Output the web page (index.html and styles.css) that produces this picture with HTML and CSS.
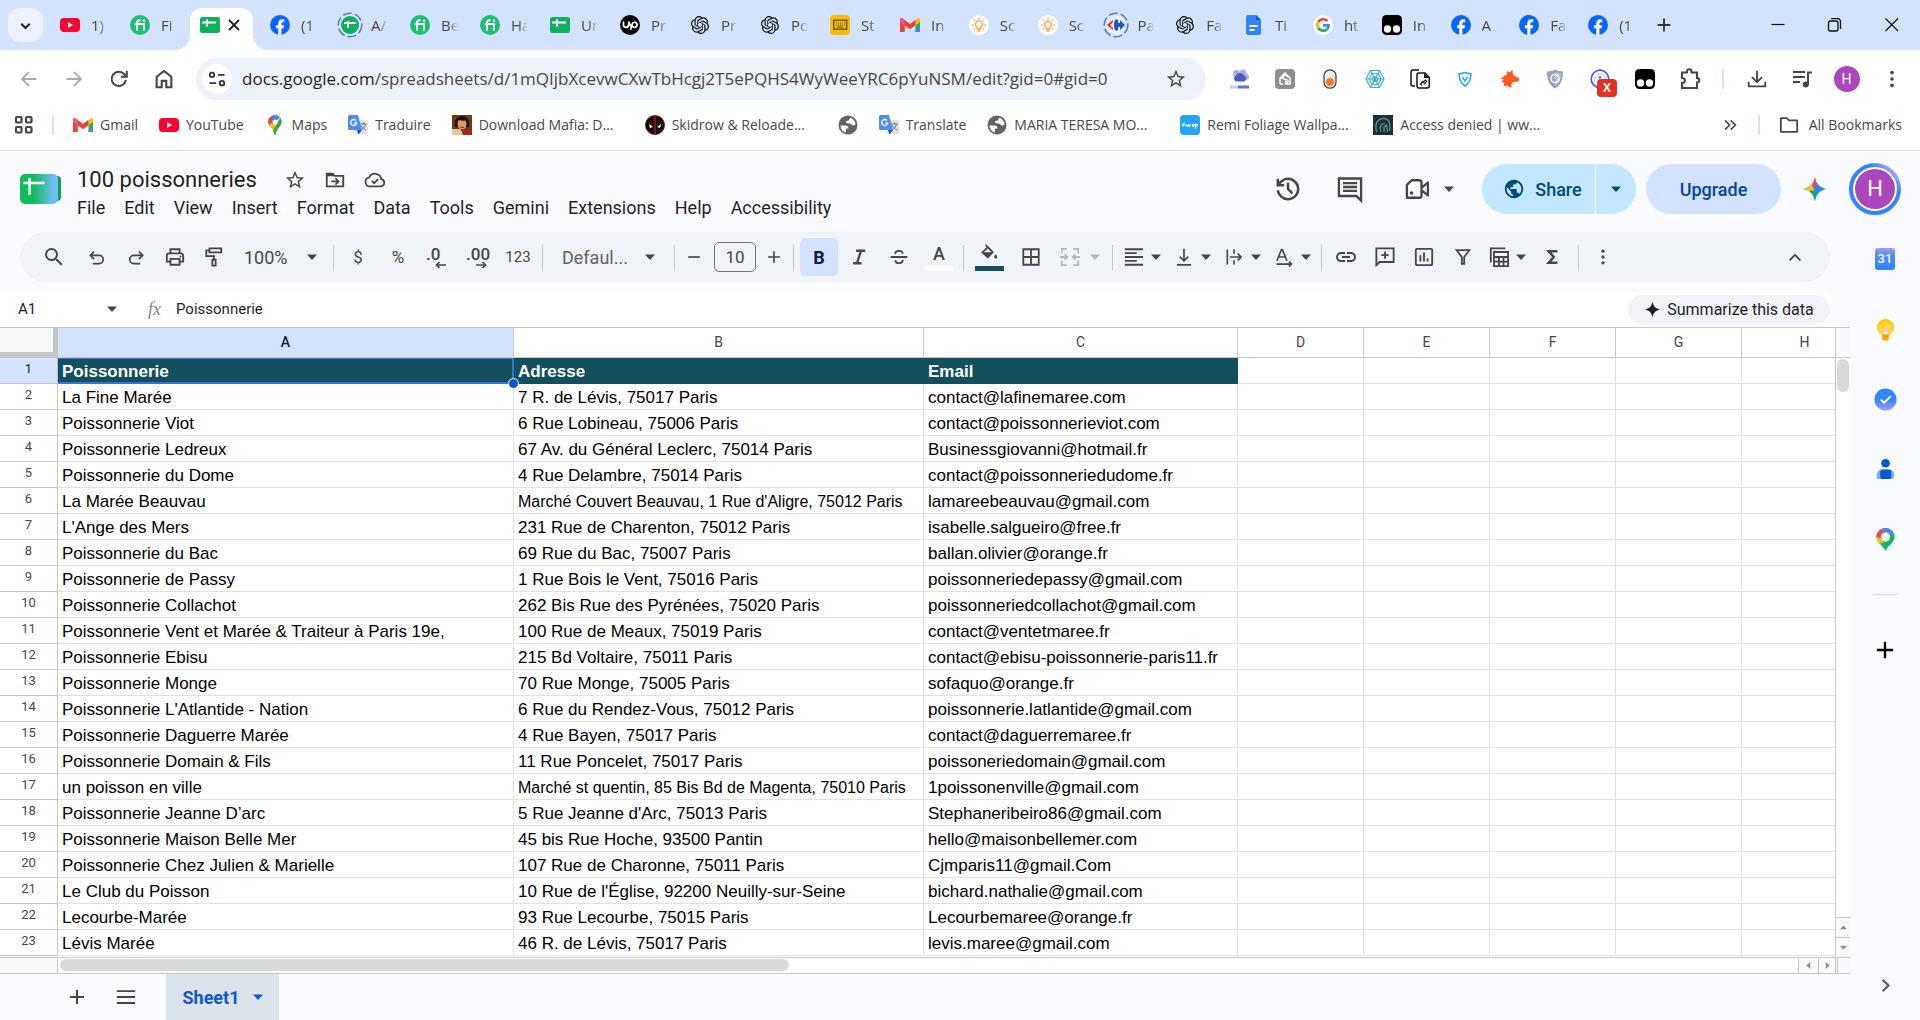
FILE: index.html
```html
<!DOCTYPE html>
<html lang="en">
<head>
<meta charset="utf-8">
<title>100 poissonneries</title>
<link rel="stylesheet" href="styles.css">
</head>
<body>
<svg class="sprite" aria-hidden="true">
  <defs>
    <linearGradient id="gSheet" x1="0" x2="1" y1="0" y2="0"><stop offset=".35" stop-color="#14bb5e"/><stop offset=".9" stop-color="#70bdf8"/></linearGradient>
    <linearGradient id="gTask" x1="0" x2="0" y1="0" y2="1"><stop offset=".5" stop-color="#3186ff"/><stop offset="1" stop-color="#a99bf8"/></linearGradient>
    <linearGradient id="gRing" x1="0" x2="1" y1="1" y2="0"><stop offset=".7" stop-color="#3186ff"/><stop offset=".9" stop-color="#a9a8ff"/></linearGradient>
    <radialGradient id="gKeep" cx=".5" cy=".7" r=".7"><stop offset="0" stop-color="#ffb8d4"/><stop offset=".5" stop-color="#ffe02e"/><stop offset="1" stop-color="#fcbd00"/></radialGradient>
    <clipPath id="cSpark"><path d="M12 0c1.200 7 5 10.800 12 12-7 1.200-10.800 5-12 12-1.200-7-5-10.800-12-12 7-1.200 10.800-5 12-12z"/></clipPath>
  </defs>
  <symbol id="youtube" viewBox="0 0 20 20"><rect y="3" width="20" height="14" rx="4" fill="#ff0033"/><path d="M8 7v6l5-3z" fill="#fff"/></symbol>
  <symbol id="fiverr" viewBox="0 0 20 20"><circle cx="10" cy="10" r="10" fill="#1dbf73"/><path d="M7 15.500V8c0-2 1-3 3.500-2.700M4.800 9H14v6.500" fill="none" stroke="#fff" stroke-width="2"/><circle cx="14" cy="5.700" r="1.200" fill="#fff"/></symbol>
  <symbol id="sheets" viewBox="0 0 20 20"><rect y="2" width="20" height="16" rx="2.500" fill="#0bb15c"/><path d="M2 7.500h14M7 4.500V12" stroke="#fff" stroke-width="2" fill="none"/></symbol>
  <symbol id="sheetsring" viewBox="0 0 26 26"><circle cx="13" cy="13" r="11.800" fill="none" stroke="#5b7db8" stroke-width="1.500" stroke-dasharray="9 3"/><circle cx="13" cy="13" r="9" fill="#0bb15c"/><path d="M7 11h12M11 9v7" stroke="#fff" stroke-width="2" fill="none"/></symbol>
  <symbol id="facebook" viewBox="0 0 20 20"><circle cx="10" cy="10" r="10" fill="#0866ff"/><path d="M8.300 20v-6.700H6v-3h2.300V8.700c0-3 1.400-4.400 4.200-4.400.5 0 1.300.1 1.700.2v2.700h-1.200c-1.200 0-1.600.5-1.600 1.700v1.400h2.700l-.5 3h-2.200V20z" fill="#fff"/></symbol>
  <symbol id="upwork" viewBox="0 0 20 20"><circle cx="10" cy="10" r="10" fill="#000"/><path d="M3.500 6.500v3.200a2.600 2.600 0 0 0 5.200 0V6.500c1 3 2 5 3.500 6M10.500 15l1.800-6.300a2.500 2.500 0 1 1 2.300 3.600c-1.200 0-2.200-.8-2.900-1.600" fill="none" stroke="#fff" stroke-width="1.700"/></symbol>
  <symbol id="openai" viewBox="0 0 24 24"><path fill="#111" d="M22.282 9.821a5.985 5.985 0 0 0-.516-4.911 6.046 6.046 0 0 0-6.510-2.900A6.065 6.065 0 0 0 4.981 4.182a5.985 5.985 0 0 0-3.998 2.900 6.046 6.046 0 0 0 .743 7.097 5.980 5.980 0 0 0 .511 4.911 6.051 6.051 0 0 0 6.515 2.900A5.985 5.985 0 0 0 13.260 24a6.056 6.056 0 0 0 5.772-4.206 5.990 5.990 0 0 0 3.998-2.900 6.056 6.056 0 0 0-.747-7.073zM13.260 22.430a4.476 4.476 0 0 1-2.876-1.041l.141-.081 4.779-2.758a.795.795 0 0 0 .393-.681v-6.737l2.020 1.169a.071.071 0 0 1 .038.052v5.583a4.504 4.504 0 0 1-4.495 4.494zM3.600 18.304a4.471 4.471 0 0 1-.535-3.014l.142.085 4.783 2.759a.771.771 0 0 0 .781 0l5.843-3.369v2.332a.080.080 0 0 1-.033.062L9.740 19.950a4.500 4.500 0 0 1-6.140-1.646zM2.341 7.896a4.485 4.485 0 0 1 2.366-1.973v5.678a.766.766 0 0 0 .388.677l5.815 3.355-2.020 1.169a.076.076 0 0 1-.071 0L3.988 14.010A4.504 4.504 0 0 1 2.341 7.872zm16.597 3.855-5.833-3.387L15.119 7.200a.076.076 0 0 1 .071 0l4.830 2.791a4.494 4.494 0 0 1-.676 8.105v-5.678a.790.790 0 0 0-.407-.667zm2.010-3.023-.141-.085-4.774-2.782a.776.776 0 0 0-.785 0L9.409 9.230V6.897a.066.066 0 0 1 .028-.061l4.830-2.787a4.500 4.500 0 0 1 6.680 4.660zM8.307 12.863l-2.020-1.164a.080.080 0 0 1-.038-.057V6.074a4.500 4.500 0 0 1 7.376-3.453l-.142.080-4.778 2.758a.795.795 0 0 0-.393.681zm1.098-2.365 2.602-1.500 2.607 1.500v3l-2.598 1.500-2.607-1.500z"/></symbol>
  <symbol id="keyboard" viewBox="0 0 20 20"><rect width="20" height="20" rx="4" fill="#fbbc04"/><rect x="3.700" y="5.200" width="13" height="9" fill="none" stroke="#5b4a12" stroke-width="1.300"/><path d="M6 8h9M6 10h9" stroke="#5b4a12" stroke-dasharray="1 1"/><path d="M7 12h6" stroke="#5b4a12"/></symbol>
  <symbol id="gmail" viewBox="0 0 20 20"><path d="M0 4.500V17h4.500V9z" fill="#ea4335"/><path d="M20 4.500V17h-4.500V9z" fill="#34a853"/><path d="M15.500 15V17H19a1 1 0 0 0 1-1v-4z" fill="#4285f4"/><path d="M15.500 5.500 18 3.300c1-.8 2 0 2 1.500V7l-4.500 3.500z" fill="#fbbc04"/><path d="M0 5c0-2 1.500-2.500 2.800-1.400L10 9l5.500-4.200v5.400L10 14.300 4.500 10.200V17H1.500A1.500 1.500 0 0 1 0 15.500z" fill="#ea4335"/><path d="M0 5c0-2 1.500-2.500 2.800-1.400L4.500 5v5.200L0 7z" fill="#e85a9b"/></symbol>
  <symbol id="bulb" viewBox="0 0 20 20"><circle cx="10" cy="10" r="10" fill="#fff"/><path d="M8.500 12.500A3.500 3.500 0 1 1 11.500 12.500V14h-3zM8.500 16h3M10 2.500V4.500M4.600 4.600l1.200 1.200M15.400 4.600l-1.200 1.200M2.800 10h1.700M15.500 10h1.700M5 14.500l1-1M15 14.500l-1-1" fill="none" stroke="#f7a23b" stroke-width="1.300"/></symbol>
  <symbol id="carrefour" viewBox="0 0 26 26"><circle cx="13" cy="13" r="11.800" fill="none" stroke="#5b7db8" stroke-width="1.500" stroke-dasharray="9 3"/><circle cx="13" cy="13" r="9.500" fill="#e9f0fd"/><path d="M10 8v2l-3 3 3 3v2l-6-5z" fill="#e3261f"/><path d="M12 8c1-1 2-1 3 0v3h2V8l5 5-5 5v-3h-2v3c-1 1-2 1-3 0-1.500-3-1.500-7 0-10z" fill="#1e55c4"/></symbol>
  <symbol id="docs" viewBox="0 0 20 20"><path d="M4 0h8l5 5v13a2 2 0 0 1-2 2H4a2 2 0 0 1-2-2V2a2 2 0 0 1 2-2z" fill="#3086f6"/><path d="M12 0l5 5h-5z" fill="#0c57d0"/><path d="M5.500 11h8M5.500 15h5" stroke="#fff" stroke-width="1.800"/></symbol>
  <symbol id="google" viewBox="0 0 20 20"><circle cx="10" cy="10" r="10" fill="#fff"/><g fill="none" stroke-width="2.700"><path d="M14.300 6A5.700 5.700 0 0 0 5.300 7" stroke="#ea4335"/><path d="M5.300 7a5.700 5.700 0 0 0 0 6" stroke="#fbbc05"/><path d="M5.300 13a5.700 5.700 0 0 0 8.700 1.200" stroke="#34a853"/><path d="M14 14.200c1.200-1.200 1.700-2.600 1.700-3.900H10" stroke="#4285f4"/></g></symbol>
  <symbol id="tamper" viewBox="0 0 20 20"><rect width="20" height="20" rx="4.500" fill="#000"/><circle cx="5.500" cy="14" r="3.700" fill="#fff"/><circle cx="14.500" cy="14" r="3.700" fill="#fff"/></symbol>
  <symbol id="maps" viewBox="0 0 20 20"><path d="M10 0a7 7 0 0 1 5 2.200L7.500 10 4 4A7 7 0 0 1 10 0z" fill="#4285f4"/><path d="M4 3a7 7 0 0 0 .5 7.500L11 4z" fill="#ea4335"/><path d="M4.500 10.500c1 1.500 3 3.500 4 6l5-8z" fill="#fbbc04"/><path d="M15.200 2.500c2 3 2 5.500.3 8-1.700 2.500-4 4.500-4.500 8.500-.3 1.300-1.700 1.300-2 0-.2-1-.5-2-1-3z" fill="#34a853"/><circle cx="10" cy="7" r="2.600" fill="#fff"/></symbol>
  <symbol id="translate" viewBox="0 0 20 20"><rect x="8" y="5" width="12" height="14" rx="1.500" fill="#dfe1e5"/><path d="M1.500 0H10l4 15H1.500A1.500 1.500 0 0 1 0 13.500v-12A1.500 1.500 0 0 1 1.500 0z" fill="#4f8df5"/><path d="M9 15h5l-3.500 4.500z" fill="#2455c3"/><path d="M8 5.500A3 3 0 1 0 8.700 8H6.500" fill="none" stroke="#fff" stroke-width="1.300"/><path d="M12.500 9h6M15.500 7.500V9M17.500 9c-.5 2.500-2 4.500-4 5.500M13.500 10.500c.7 2 2.500 3.500 4.500 4.500" fill="none" stroke="#6a747f"/></symbol>
  <symbol id="portrait" viewBox="0 0 20 20"><path fill="#6b3b12" d="M0 0h20v20H0z"/><path d="M3 8c0-9 14-9 14 0v4H3z" fill="#1d0f08"/><ellipse cx="10" cy="9" rx="4.500" ry="5.500" fill="#d99a68"/><path d="M4 4c3-3 9-3 12 1-4 1-8 1-12-1z" fill="#1d0f08"/><path d="M0 14h8l5 6H0z" fill="#dfc9a5"/><path d="M9 14l11 1v5h-9z" fill="#a5251b"/><path d="M8 12q2 1 4 0" stroke="#8c1d18" fill="none"/></symbol>
  <symbol id="skid" viewBox="0 0 20 20"><circle cx="10" cy="10" r="9.600" fill="#160808" stroke="#7a1616" stroke-width=".8"/><path d="M10 1v18" stroke="#b01818" stroke-width="1.400"/><path d="M4 9l4 3-3 1zM16 9l-4 3 3 1z" fill="#fff"/></symbol>
  <symbol id="globe" viewBox="2 2 20 20"><circle cx="12" cy="12" r="9.500" fill="#5f6368"/><path d="M4.500 12.500H9c2.500 0 3.500 1 3.500 3H10V19.500C7 19 4.500 16 4.500 12.500zM14.500 4.800A8 8 0 0 1 19.500 11c-1 2-3 2-4 .5S10 11 10 9s3-.5 3-2.200z" fill="#fff"/></symbol>
  <symbol id="fwp" viewBox="0 0 20 20"><rect width="20" height="20" rx="4" fill="#22a4f8"/><path d="M3 12V9q1-2 2-1M2 10h4M6.500 9v2q1 2 1.800 0V9v2q1 2 1.800 0V9M12.500 9v3-2q2-2 2 0t-2 1M15.500 14V9q3 0 2 2t-2 0" stroke="#fff" fill="none"/></symbol>
  <symbol id="denied" viewBox="0 0 20 20"><path fill="#1f2b38" d="M0 0h20v20H0z"/><path d="M4 17C1 10 4 4 10 3.500S18 8 16.500 16M8 17c-2-5 0-9 4-8.500M11 17V12l2.500-2 1 7" fill="none" stroke="#4d8f80" stroke-width="1.500"/></symbol>
  <symbol id="back" viewBox="0 0 24 24"><path d="M20 12H5M12 4.500 4.500 12l7.500 7.500" fill="none" stroke="currentColor" stroke-width="2"/></symbol>
  <symbol id="forward" viewBox="0 0 24 24"><path d="M4 12h15M12 4.500l7.500 7.500-7.500 7.500" fill="none" stroke="currentColor" stroke-width="2"/></symbol>
  <symbol id="reload" viewBox="0 0 24 24"><path d="M19.500 13a7.800 7.800 0 1 1-1.700-6.200L20 9M20.500 3v6.500H14" fill="none" stroke="currentColor" stroke-width="2.200"/></symbol>
  <symbol id="home" viewBox="0 0 24 24"><path d="M4 21V9.500L12 3.300l8 6.200V21h-5.500v-7h-5v7z" fill="none" stroke="currentColor" stroke-width="2.300"/></symbol>
  <symbol id="site" viewBox="0 0 24 24"><path d="M13 7h8M3 17h8" stroke="currentColor" stroke-width="2.200"/><circle cx="6" cy="7" r="2.700" fill="none" stroke="currentColor" stroke-width="2.200"/><circle cx="18" cy="17" r="2.700" fill="none" stroke="currentColor" stroke-width="2.200"/></symbol>
  <symbol id="star" viewBox="0 0 24 24"><path fill="currentColor" d="M22 9.240l-7.190-.62L12 2 9.190 8.630 2 9.240l5.460 4.730L5.820 21 12 17.270 18.180 21l-1.630-7.030L22 9.240zM12 15.400l-3.760 2.270 1-4.280-3.320-2.880 4.380-.38L12 6.100l1.710 4.040 4.380.38-3.320 2.880 1 4.280L12 15.400z"/></symbol>
  <symbol id="apps" viewBox="0 0 20 20"><g fill="none" stroke="currentColor" stroke-width="2.200"><rect x="2" y="2" width="5.500" height="5.500" rx="1"/><rect x="12" y="2" width="5.500" height="5.500" rx="1"/><rect x="2" y="12" width="5.500" height="5.500" rx="1"/><rect x="12" y="12" width="5.500" height="5.500" rx="1"/></g></symbol>
  <symbol id="x" viewBox="0 0 20 20"><path d="M5 5l10 10M15 5L5 15" stroke="currentColor" stroke-width="1.800"/></symbol>
  <symbol id="plus" viewBox="0 0 24 24"><path d="M12 5v14M5 12h14" stroke="currentColor" stroke-width="2"/></symbol>
  <symbol id="minus" viewBox="0 0 24 24"><path d="M5 12h14" stroke="currentColor" stroke-width="2"/></symbol>
  <symbol id="chevdown" viewBox="0 0 24 24"><path d="M6 9.500l6 6 6-6" fill="none" stroke="currentColor" stroke-width="3"/></symbol>
  <symbol id="chevup" viewBox="0 0 24 24"><path d="M5.500 16l6.500-6.500 6.500 6.500" fill="none" stroke="currentColor" stroke-width="2.200"/></symbol>
  <symbol id="chevright" viewBox="0 0 24 24"><path d="M9 6l6 6-6 6" fill="none" stroke="currentColor" stroke-width="2.500"/></symbol>
  <symbol id="dblright" viewBox="0 0 24 24"><path d="M6 6.500l5.500 5.500L6 17.500M13 6.500l5.500 5.500-5.500 5.500" fill="none" stroke="currentColor" stroke-width="2"/></symbol>
  <symbol id="folder" viewBox="1 1 22 22"><path d="M3 19.500v-15h6.500L12 7h9v12.500z" fill="none" stroke="currentColor" stroke-width="2" stroke-linejoin="round"/></symbol>
  <symbol id="dots" viewBox="0 0 24 24"><g fill="currentColor"><circle cx="12" cy="5" r="2"/><circle cx="12" cy="12" r="2"/><circle cx="12" cy="19" r="2"/></g></symbol>
  <symbol id="winmin" viewBox="0 0 20 20"><path d="M3.500 9.500h13" stroke="currentColor" stroke-width="1.200"/></symbol>
  <symbol id="winmax" viewBox="0 0 20 20"><rect x="3.500" y="6" width="9.500" height="10" rx="2" fill="none" stroke="currentColor" stroke-width="1.300"/><path d="M6 3.700h6.500a3 3 0 0 1 3 3V14" fill="none" stroke="currentColor" stroke-width="1.300"/></symbol>
  <symbol id="winx" viewBox="0 0 20 20"><path d="M3.500 3.500l12.500 12.500M16 3.500L3.500 16" stroke="currentColor" stroke-width="1.200"/></symbol>
  <symbol id="cloudext" viewBox="0 0 20 20"><g fill="#aab2e4"><circle cx="6.500" cy="4.500" r="3.500"/><circle cx="13" cy="4" r="3.500"/><circle cx="16" cy="8" r="3"/></g><path d="M6 12.500a3.200 3.200 0 0 1 0-6 4.500 4.500 0 0 1 8 0 3.200 3.200 0 0 1 0 6z" fill="#4a5dbd"/><path d="M0 18h8" stroke="#c5caec" stroke-width="3"/><path d="M8 18h11" stroke="#6472c8" stroke-width="3"/></symbol>
  <symbol id="greyext" viewBox="0 0 20 20"><rect width="20" height="20" rx="4" fill="#8e8e8e"/><path d="M5 15V9l5-5 5 5v6h-4l3-3M8 15H5M13 8l-3-2-3 3 5 2-2 3" fill="none" stroke="#fff" stroke-width="1.500"/></symbol>
  <symbol id="toggle" viewBox="0 0 20 20"><rect x="4" y=".8" width="12" height="18.400" rx="6" fill="#ececec" stroke="#444" stroke-width="1.300"/><circle cx="10" cy="13" r="4" fill="#f47b2a"/></symbol>
  <symbol id="web" viewBox="0 0 20 20"><g fill="none" stroke="#3db2c6" stroke-width="1.200"><path d="M5.500 1.500h9L19 10l-4.500 8.500h-9L1 10z"/><path d="M7 4.500h6l3 5.500-3 5.500H7L4 10z"/><path d="M8.500 7.500h3L13 10l-1.500 2.500h-3L7 10zM5.500 1.500l9 17M14.500 1.500l-9 17M1 10h18"/></g></symbol>
  <symbol id="copyext" viewBox="0 0 20 20"><path d="M5 17H3a2 2 0 0 1-2-2V3a2 2 0 0 1 2-2h6" fill="none" stroke="#111" stroke-width="1.500"/><path d="M7 6a2 2 0 0 1 2-2h6l4.300 4.500V17a2 2 0 0 1-2 2H9a2 2 0 0 1-2-2z" fill="#fff" stroke="#111" stroke-width="1.500"/><path d="M14 4v5h5z" fill="#111"/><path d="M12 16.500l-1.500-1.500 3-3M12.500 14l3-3 1.300 1.300-3 3" fill="none" stroke="#111" stroke-width="1.200"/></symbol>
  <symbol id="vshield" viewBox="0 0 20 20"><path d="M10 3.500c2 1 4 1.200 6 1.200 0 5-1 9-6 12.300-5-3.300-6-7.300-6-12.300 2 0 4-.2 6-1.200z" fill="#fff" stroke="#27a9f0" stroke-width="1.500"/><path d="M7.500 8l2.500 4 2.500-4" fill="none" stroke="#27a9f0" stroke-width="1.500"/></symbol>
  <symbol id="fox" viewBox="0 0 20 20"><path d="M.5 9.500C3.500 8 4 6.500 7 5.500L7 2l2 1.500L12.500 1l.5 5 6.500 3.500-1 3-5.500.5-2 3 .5 3-5-2.500-3 1 1-3.500-3-1 2-2.500z" fill="#fc5a22"/></symbol>
  <symbol id="greyshield" viewBox="0 0 20 20"><path d="M10 .5C12.500 2 15 2.300 18 2.500c0 7-1.500 13-8 17-6.500-4-8-10-8-17C5 2.300 7.500 2 10 .5z" fill="#98a1b3"/><path d="M10 2.500c2 1 4 1.400 6.200 1.600 0 5.500-1.300 10-6.200 13.200z" fill="#bcc3cf"/><circle cx="10" cy="9.500" r="4" fill="none" stroke="#f3f5f8" stroke-width="1.600"/><path d="M8 10l2-2 4-2" stroke="#f3f5f8" fill="none"/></symbol>
  <symbol id="arcext" viewBox="0 0 20 20"><circle cx="10" cy="10" r="8.800" fill="none" stroke="#3b5bfd" stroke-width="1.700"/><path d="M4.500 12C5 8 7 5.500 10 5s5 2 5.500 5" fill="none" stroke="#b4c1ff"/><circle cx="10" cy="8.500" r="1.200" fill="#3b5bfd"/></symbol>
  <symbol id="puzzle" viewBox="1 1 22 22"><path d="M4 5.500h5V4.500a2 2 0 0 1 4.500 0v1H19V11a2.200 2.200 0 0 1 0 4.500V21H4v-5c4-.5 4-4.500 0-5z" fill="none" stroke="currentColor" stroke-width="2"/></symbol>
  <symbol id="download" viewBox="0 0 24 24"><path d="M12 3v12M6.500 10l5.500 5.500 5.500-5.500M3 15v5h18v-5" fill="none" stroke="currentColor" stroke-width="2"/></symbol>
  <symbol id="media" viewBox="1 1 22 22"><path d="M3 5h12M3 10h12M3 15h7M18 18V5.500h4" fill="none" stroke="currentColor" stroke-width="2"/><circle cx="15.800" cy="17.500" r="3" fill="currentColor"/></symbol>
  <symbol id="bigsheets" viewBox="0 0 41 30"><path d="M30 2h7a4 4 0 0 1 4 4v17a4 4 0 0 1-4 4h-7z" fill="#0a9f4d"/><rect width="38" height="30" rx="5" fill="url(#gSheet)"/><path d="M3.500 9h21M9.500 4v17" stroke="#fff" stroke-width="2.500" fill="none"/></symbol>
  <symbol id="movefolder" viewBox="0 0 24 24"><path d="M3 19V5h6.500l2 2.500H21V19z" fill="none" stroke="currentColor" stroke-width="2"/><path d="M3 5h6.500l2 3H3z" fill="currentColor"/><path d="M8 13.500h7M12.500 10l3.500 3.500-3.500 3.500" fill="none" stroke="currentColor" stroke-width="1.800"/></symbol>
  <symbol id="cloud" viewBox="0 0 24 24"><path d="M18.500 19H6.500a5 5 0 0 1-.8-9.900 7 7 0 0 1 13.200 2A4 4 0 0 1 18.500 19z" fill="none" stroke="currentColor" stroke-width="1.900"/><path d="M8.500 13l2.500 2.500 4.500-4.500" fill="none" stroke="currentColor" stroke-width="1.900"/></symbol>
  <symbol id="history" viewBox="1 1 22 22"><path fill="currentColor" d="M12 21a8.700 8.700 0 0 1-6-2.300 8.800 8.800 0 0 1-3-5.700h2.050a7 7 0 1 0 1.200-5H9v2H3V4h2v2.350A9 9 0 1 1 12 21zm2.800-4.800L11 12.400V7h2v4.600l3.200 3.200z"/></symbol>
  <symbol id="comment" viewBox="0 0 24 24"><path d="M2.500 3h19v19l-4-4h-15z" fill="none" stroke="currentColor" stroke-width="2"/><path d="M6 7h12M6 10.300h12M6 13.600h12" stroke="currentColor" stroke-width="2"/></symbol>
  <symbol id="meet" viewBox="0 0 24 24"><path d="M6.500 4.500H13a2 2 0 0 1 2 2v11a2 2 0 0 1-2 2H2.500v-11zM15 11l5.500-4.500v11L15 13z" fill="none" stroke="currentColor" stroke-width="2" stroke-linejoin="round"/><circle cx="6.500" cy="15.500" r="1.500" fill="currentColor"/></symbol>
  <symbol id="public" viewBox="0 0 24 24"><path fill="currentColor" d="M12 2C6.480 2 2 6.480 2 12s4.480 10 10 10 10-4.480 10-10S17.520 2 12 2zm-1 17.930c-3.950-.49-7-3.850-7-7.930 0-.62.080-1.210.210-1.790L9 15v1c0 1.100.9 2 2 2v1.930zm6.900-2.540c-.26-.81-1-1.390-1.900-1.390h-1v-3c0-.55-.45-1-1-1H8v-2h2c.55 0 1-.45 1-1V7h2c1.100 0 2-.9 2-2v-.41c2.930 1.190 5 4.060 5 7.410 0 2.080-.8 3.970-2.100 5.390z"/></symbol>
  <symbol id="spark" viewBox="0 0 24 24"><g clip-path="url(#cSpark)"><path d="M0 0h24v24H0z" fill="#3186ff"/><path d="M0 0h12l2 8-4 4-10-2z" fill="#ef4b4b"/><path d="M0 9l9-1 2 5-4 4-7-3z" fill="#f5c518"/><path d="M0 24l8-11 6 3-1 8z" fill="#16a765"/></g></symbol>
  <symbol id="sparkdark" viewBox="0 0 24 24"><path fill="currentColor" d="M12 1c1.200 6.500 4.500 9.800 11 11-6.500 1.200-9.800 4.500-11 11-1.200-6.500-4.500-9.800-11-11 6.500-1.200 9.800-4.500 11-11z"/></symbol>
  <symbol id="search" viewBox="0 0 24 24"><path fill="currentColor" d="M15.500 14h-.79l-.28-.27A6.470 6.470 0 0 0 16 9.500 6.500 6.500 0 1 0 9.500 16c1.610 0 3.090-.59 4.230-1.570l.27.28v.79l5 4.990L20.490 19l-4.990-5zm-6 0C7.010 14 5 11.990 5 9.500S7.010 5 9.500 5 14 7.010 14 9.500 11.990 14 9.500 14z"/></symbol>
  <symbol id="undo" viewBox="0 0 24 24"><path d="M7 20h7.500a5 5 0 0 0 0-10H4M8.500 5.500 4 10l4.500 4.500" fill="none" stroke="currentColor" stroke-width="2"/></symbol>
  <symbol id="redo" viewBox="0 0 24 24"><path d="M17 20H9.500a5 5 0 0 1 0-10H20M15.500 5.500 20 10l-4.500 4.500" fill="none" stroke="currentColor" stroke-width="2"/></symbol>
  <symbol id="print" viewBox="1 1 22 22"><path d="M7 8V3.500h10V8M6.500 17H3v-6.500A2.500 2.500 0 0 1 5.500 8h13a2.500 2.500 0 0 1 2.500 2.500V17h-3.500M7 14h10v6.500H7z" fill="none" stroke="currentColor" stroke-width="2"/><circle cx="18" cy="11.500" r="1.100" fill="currentColor"/></symbol>
  <symbol id="paint" viewBox="1 1 22 22"><path d="M7 2.500h13v4.500H7zM7 4.700H3.500V11H12v4M10.200 15h3.600v6.500h-3.600z" fill="none" stroke="currentColor" stroke-width="2"/></symbol>
  <symbol id="arrowleft" viewBox="0 0 12 8"><path d="M11 4H2M4.500 1l-3 3 3 3" fill="none" stroke="currentColor" stroke-width="1.700"/></symbol>
  <symbol id="arrowright" viewBox="0 0 12 8"><path d="M1 4h9M7.500 1l3 3-3 3" fill="none" stroke="currentColor" stroke-width="1.700"/></symbol>
  <symbol id="caret" viewBox="0 0 10 10"><path d="M0 2.500h10L5 8z" fill="currentColor"/></symbol>
  <symbol id="italic" viewBox="0 0 24 24"><path d="M8.500 4.500h11M5 19.500h10M14.500 4.500l-5 15" fill="none" stroke="currentColor" stroke-width="2.800"/></symbol>
  <symbol id="strike" viewBox="0 0 24 24"><path d="M2 12h20M7.500 8.500C7.500 3.500 16 3.500 16.500 8M7.500 16c.5 4.700 9 4.700 9-.7" fill="none" stroke="currentColor" stroke-width="2.200"/></symbol>
  <symbol id="fill" viewBox="0 0 24 24"><path d="M8 1l8.500 9-6 6L4 10l6.500-6" fill="none" stroke="currentColor" stroke-width="2"/><path d="M4.500 10h12l-6 6z" fill="currentColor"/><path d="M20 12c3 4 1.500 5.500 0 5.500s-3-1.500 0-5.500z" fill="currentColor"/></symbol>
  <symbol id="borders" viewBox="1 1 22 22"><path d="M3.500 3.500h17v17h-17zM12 3.500v17M3.500 12h17" fill="none" stroke="currentColor" stroke-width="2"/></symbol>
  <symbol id="merge" viewBox="1 1 22 22"><path d="M8.500 3H3v5M15.500 3H21v5M8.500 21H3v-5M15.500 21H21v-5M1 12h8M6 9l3 3-3 3M23 12h-8M18 9l-3 3 3 3" fill="none" stroke="currentColor" stroke-width="2"/></symbol>
  <symbol id="align" viewBox="1 1 22 22"><path d="M2 3.500h20M2 7.700h13M2 12h20M2 16.300h13M2 20.500h20" stroke="currentColor" stroke-width="2"/></symbol>
  <symbol id="valign" viewBox="0 0 24 24"><path d="M3.500 21.500h17M12 2v14M7 11.500l5 5 5-5" fill="none" stroke="currentColor" stroke-width="2"/></symbol>
  <symbol id="wrap" viewBox="0 0 24 24"><path d="M4 3v18M12 3v5M12 16v5M7 12h13M16.500 8l4 4-4 4" fill="none" stroke="currentColor" stroke-width="2"/></symbol>
  <symbol id="rotate" viewBox="0 0 24 24"><path d="M3.500 16.500 9 3h1l5.500 13.500M5.500 12h8M3 20.500h18M18 17.500l3 3-3 3" fill="none" stroke="currentColor" stroke-width="2"/></symbol>
  <symbol id="link" viewBox="2 2 20 20"><path fill="currentColor" d="M3.900 12c0-1.710 1.390-3.100 3.100-3.100h4V7H7c-2.760 0-5 2.240-5 5s2.240 5 5 5h4v-1.900H7c-1.710 0-3.100-1.390-3.100-3.100zM8 13h8v-2H8v2zm9-6h-4v1.900h4c1.710 0 3.100 1.390 3.100 3.100s-1.390 3.100-3.100 3.100h-4V17h4c2.760 0 5-2.240 5-5s-2.240-5-5-5z"/></symbol>
  <symbol id="addcomment" viewBox="1 1 22 22"><path d="M2.500 21V2.500h19v15H6zM12 6v8M8 10h8" fill="none" stroke="currentColor" stroke-width="2"/></symbol>
  <symbol id="chart" viewBox="1 1 22 22"><rect x="3" y="3" width="18" height="18" rx="1" fill="none" stroke="currentColor" stroke-width="2"/><path d="M8 10v7M12 7v10M16 13.500V17" stroke="currentColor" stroke-width="2"/></symbol>
  <symbol id="filter" viewBox="1 1 22 22"><path d="M5 4.500h14L13.300 12v7.500h-2.600V12z" fill="none" stroke="currentColor" stroke-width="2"/></symbol>
  <symbol id="tables" viewBox="1 1 22 22"><path d="M3 18V2.500h16M6.500 6.500H22V22H6.500zM6.500 12H22M6.500 17H22M12 12v10M17 12v10" fill="none" stroke="currentColor" stroke-width="2"/></symbol>
  <symbol id="sigma" viewBox="0 0 24 24"><path d="M18.500 5H8l6 7-6 7h10.500" fill="none" stroke="currentColor" stroke-width="3"/></symbol>
  <symbol id="menu" viewBox="0 0 24 24"><path d="M2 5.500h20M2 12h20M2 18.500h20" stroke="currentColor" stroke-width="2"/></symbol>
  <symbol id="keep" viewBox="0 0 24 24"><circle cx="12" cy="10" r="9" fill="url(#gKeep)"/><path d="M8.500 17h7v3.500a3 3 0 0 1-3 3h-1a3 3 0 0 1-3-3z" fill="#fba400"/><ellipse cx="12" cy="15.500" rx="2.500" ry="1.500" fill="#fff"/></symbol>
  <symbol id="tasks" viewBox="0 0 24 24"><circle cx="12" cy="12" r="11.500" fill="url(#gTask)"/><path d="M7 12l3.500 3.500L17.500 8.500" fill="none" stroke="#fff" stroke-width="2"/></symbol>
  <symbol id="contacts" viewBox="0 0 24 24"><circle cx="12" cy="5.500" r="4.500" fill="#0b57d0"/><path d="M3 22v-5a5 5 0 0 1 5-5h8a5 5 0 0 1 5 5v2a3 3 0 0 1-3 3z" fill="#82a9f8"/><rect x="6.500" y="12" width="11.500" height="10" rx="3" fill="#0b57d0"/></symbol>
  <symbol id="pin" viewBox="0 0 24 24"><path d="M12 24C10 19 2.500 15 2.500 9.500a9.500 9.500 0 0 1 19 0C21.500 15 14 19 12 24z" fill="#17b45b"/><path d="M5.500 16C3.500 14 2.500 12 2.500 9.500L7 8l3 8z" fill="#fbbc04"/><path d="M2.500 9.500A9.500 9.500 0 0 1 9 .6l3 6-5 4z" fill="#ee4a4a"/><path d="M8.500.7A9.500 9.500 0 0 1 20.500 5l-7 4z" fill="#4b86f7"/><circle cx="12" cy="9.500" r="4.800" fill="#fff"/></symbol>
</svg>

<header class="browser">
  <div class="tabstrip">
    <button class="tabsearch" aria-label="Search tabs"><svg><use href="#chevdown"/></svg></button>
    <nav class="tabs">
      <a class="tab" href="#"><svg><use href="#youtube"/></svg><span>1)</span></a>
      <a class="tab" href="#"><svg><use href="#fiverr"/></svg><span>Fi</span></a>
      <a class="tab active" href="#"><svg><use href="#sheets"/></svg><svg class="close"><use href="#x"/></svg></a>
      <a class="tab" href="#"><svg><use href="#facebook"/></svg><span>(1</span></a>
      <a class="tab ringed" href="#"><svg><use href="#sheetsring"/></svg><span>A/</span></a>
      <a class="tab" href="#"><svg><use href="#fiverr"/></svg><span>Be</span></a>
      <a class="tab" href="#"><svg><use href="#fiverr"/></svg><span>Ha</span></a>
      <a class="tab" href="#"><svg><use href="#sheets"/></svg><span>Un</span></a>
      <a class="tab" href="#"><svg><use href="#upwork"/></svg><span>Pr</span></a>
      <a class="tab" href="#"><svg class="ai"><use href="#openai"/></svg><span>Pr</span></a>
      <a class="tab" href="#"><svg class="ai"><use href="#openai"/></svg><span>Po</span></a>
      <a class="tab" href="#"><svg><use href="#keyboard"/></svg><span>St</span></a>
      <a class="tab" href="#"><svg><use href="#gmail"/></svg><span>In</span></a>
      <a class="tab" href="#"><svg><use href="#bulb"/></svg><span>Sc</span></a>
      <a class="tab" href="#"><svg><use href="#bulb"/></svg><span>Sc</span></a>
      <a class="tab ringed" href="#"><svg><use href="#carrefour"/></svg><span>Pa</span></a>
      <a class="tab" href="#"><svg class="ai"><use href="#openai"/></svg><span>Fa</span></a>
      <a class="tab" href="#"><svg><use href="#docs"/></svg><span>Ti</span></a>
      <a class="tab" href="#"><svg><use href="#google"/></svg><span>ht</span></a>
      <a class="tab" href="#"><svg><use href="#tamper"/></svg><span>In</span></a>
      <a class="tab" href="#"><svg><use href="#facebook"/></svg><span>A</span></a>
      <a class="tab" href="#"><svg><use href="#facebook"/></svg><span>Fa</span></a>
      <a class="tab" href="#"><svg><use href="#facebook"/></svg><span>(1</span></a>
    </nav>
    <button class="newtab" aria-label="New tab"><svg><use href="#plus"/></svg></button>
    <div class="wincontrols">
      <button aria-label="Minimize"><svg><use href="#winmin"/></svg></button>
      <button aria-label="Restore"><svg><use href="#winmax"/></svg></button>
      <button aria-label="Close"><svg><use href="#winx"/></svg></button>
    </div>
  </div>

  <div class="navbar">
    <button class="nav off" aria-label="Back"><svg><use href="#back"/></svg></button>
    <button class="nav off" aria-label="Forward"><svg><use href="#forward"/></svg></button>
    <button class="nav" aria-label="Reload"><svg><use href="#reload"/></svg></button>
    <button class="nav" aria-label="Home"><svg><use href="#home"/></svg></button>
    <div class="omnibox">
      <button class="siteinfo" aria-label="Site information"><svg><use href="#site"/></svg></button>
      <div class="url"><b>docs.google.com</b>/spreadsheets/d/1mQIjbXcevwCXwTbHcgj2T5ePQHS4WyWeeYRC6pYuNSM/edit?gid=0#gid=0</div>
      <button class="nav" aria-label="Bookmark"><svg><use href="#star"/></svg></button>
    </div>
    <div class="extensions">
      <button class="nav" aria-label="Cloud"><svg class="s20"><use href="#cloudext"/></svg></button>
      <button class="nav" aria-label="Lock"><svg class="s20"><use href="#greyext"/></svg></button>
      <button class="nav" aria-label="Toggle"><svg class="s20"><use href="#toggle"/></svg></button>
      <button class="nav" aria-label="Web"><svg class="s20"><use href="#web"/></svg></button>
      <button class="nav" aria-label="Copy link"><svg class="s20"><use href="#copyext"/></svg></button>
      <button class="nav" aria-label="Shield"><svg class="s20"><use href="#vshield"/></svg></button>
      <button class="nav" aria-label="Fox"><svg class="s20"><use href="#fox"/></svg></button>
      <button class="nav" aria-label="Security"><svg class="s20"><use href="#greyshield"/></svg></button>
      <button class="nav badged" aria-label="Arc"><svg class="s20"><use href="#arcext"/></svg><span class="badge">X</span></button>
      <button class="nav" aria-label="Scripts"><svg class="s20"><use href="#tamper"/></svg></button>
      <button class="nav" aria-label="Extensions"><svg><use href="#puzzle"/></svg></button>
    </div>
    <i class="bar"></i>
    <button class="nav" aria-label="Downloads"><svg><use href="#download"/></svg></button>
    <button class="nav" aria-label="Media"><svg><use href="#media"/></svg></button>
    <button class="nav" aria-label="Profile"><span class="profile">H</span></button>
    <button class="nav" aria-label="Menu"><svg><use href="#dots"/></svg></button>
  </div>

  <nav class="bookmarks">
    <button class="apps" aria-label="Apps"><svg class="s20"><use href="#apps"/></svg></button>
    <i class="bar"></i>
    <a href="#"><svg><use href="#gmail"/></svg>Gmail</a>
    <a href="#"><svg><use href="#youtube"/></svg>YouTube</a>
    <a href="#"><svg><use href="#maps"/></svg>Maps</a>
    <a href="#"><svg><use href="#translate"/></svg>Traduire</a>
    <a class="long" href="#"><svg><use href="#portrait"/></svg>Download Mafia: D...</a>
    <a class="long" href="#"><svg><use href="#skid"/></svg>Skidrow &amp; Reloade...</a>
    <a href="#" aria-label="Bookmark"><svg><use href="#globe"/></svg></a>
    <a href="#"><svg><use href="#translate"/></svg>Translate</a>
    <a class="long" href="#"><svg><use href="#globe"/></svg>MARIA TERESA MO...</a>
    <a class="long" href="#"><svg><use href="#fwp"/></svg>Remi Foliage Wallpa...</a>
    <a class="long" href="#"><svg><use href="#denied"/></svg>Access denied | ww...</a>
    <button class="more" aria-label="More bookmarks"><svg class="s20"><use href="#dblright"/></svg></button>
    <i class="bar"></i>
    <a class="all" href="#"><svg><use href="#folder"/></svg>All Bookmarks</a>
  </nav>
</header>

<div class="app">
  <header class="doc">
    <a class="logo" href="#" aria-label="Sheets home"><svg><use href="#bigsheets"/></svg></a>
    <div class="titles">
      <div class="titlerow">
        <h1>100 poissonneries</h1>
        <button aria-label="Star"><svg><use href="#star"/></svg></button>
        <button aria-label="Move"><svg><use href="#movefolder"/></svg></button>
        <button aria-label="Saved"><svg><use href="#cloud"/></svg></button>
      </div>
      <nav class="menus">
        <button>File</button><button>Edit</button><button>View</button><button>Insert</button><button>Format</button><button>Data</button><button>Tools</button><button>Gemini</button><button>Extensions</button><button>Help</button><button>Accessibility</button>
      </nav>
    </div>
    <div class="actions">
      <button class="act" aria-label="History"><svg><use href="#history"/></svg></button>
      <button class="act" aria-label="Comments"><svg><use href="#comment"/></svg></button>
      <button class="act meet" aria-label="Meet"><svg><use href="#meet"/></svg><svg class="caret"><use href="#caret"/></svg></button>
      <div class="share">
        <button class="sharemain"><svg><use href="#public"/></svg>Share</button>
        <button class="sharemore" aria-label="Share options"><svg class="caret"><use href="#caret"/></svg></button>
      </div>
      <button class="upgrade">Upgrade</button>
      <button class="gemini" aria-label="Gemini"><svg><use href="#spark"/></svg></button>
      <button class="account" aria-label="Account"><svg viewBox="0 0 52 52"><circle cx="26" cy="26" r="24" fill="#fff" stroke="url(#gRing)" stroke-width="4"/></svg><span>H</span></button>
    </div>
  </header>

  <main class="work">
    <div class="toolbar">
      <div class="group tight">
        <button class="first" aria-label="Search"><svg class="s24"><use href="#search"/></svg></button>
        <button aria-label="Undo"><svg><use href="#undo"/></svg></button>
        <button aria-label="Redo"><svg><use href="#redo"/></svg></button>
        <button aria-label="Print"><svg><use href="#print"/></svg></button>
        <button aria-label="Paint format"><svg><use href="#paint"/></svg></button>
        <button class="zoom">100%<svg class="caret"><use href="#caret"/></svg></button>
      </div>
      <div class="group">
        <button class="light">$</button>
        <button class="light">%</button>
        <button class="dec" aria-label="Decrease decimals">.0<svg><use href="#arrowleft"/></svg></button>
        <button class="dec" aria-label="Increase decimals">.00<svg><use href="#arrowright"/></svg></button>
        <button class="num">123</button>
      </div>
      <div class="group">
        <button class="font">Defaul...<svg class="caret"><use href="#caret"/></svg></button>
      </div>
      <div class="group">
        <button class="step" aria-label="Smaller"><svg><use href="#minus"/></svg></button>
        <input class="size" type="text" value="10" aria-label="Font size">
        <button class="step" aria-label="Larger"><svg><use href="#plus"/></svg></button>
      </div>
      <div class="group">
        <button class="bold">B</button>
        <button aria-label="Italic"><svg><use href="#italic"/></svg></button>
        <button aria-label="Strikethrough"><svg><use href="#strike"/></svg></button>
        <button class="ink">A<i class="white"></i></button>
      </div>
      <div class="group roomy">
        <button class="ink" aria-label="Fill"><svg><use href="#fill"/></svg><i></i></button>
        <button aria-label="Borders"><svg><use href="#borders"/></svg></button>
        <button class="drop wide" aria-label="Merge" disabled><svg><use href="#merge"/></svg><svg class="caret"><use href="#caret"/></svg></button>
      </div>
      <div class="group">
        <button class="drop" aria-label="Align"><svg><use href="#align"/></svg><svg class="caret"><use href="#caret"/></svg></button>
        <button class="drop" aria-label="Vertical align"><svg><use href="#valign"/></svg><svg class="caret"><use href="#caret"/></svg></button>
        <button class="drop" aria-label="Wrap"><svg><use href="#wrap"/></svg><svg class="caret"><use href="#caret"/></svg></button>
        <button class="drop" aria-label="Rotate"><svg><use href="#rotate"/></svg><svg class="caret"><use href="#caret"/></svg></button>
      </div>
      <div class="group tight">
        <button aria-label="Link"><svg><use href="#link"/></svg></button>
        <button aria-label="Comment"><svg><use href="#addcomment"/></svg></button>
        <button aria-label="Chart"><svg><use href="#chart"/></svg></button>
        <button aria-label="Filter"><svg><use href="#filter"/></svg></button>
        <button class="drop" aria-label="Tables"><svg><use href="#tables"/></svg><svg class="caret"><use href="#caret"/></svg></button>
        <button aria-label="Functions"><svg><use href="#sigma"/></svg></button>
      </div>
      <div class="group end">
        <button aria-label="More"><svg><use href="#dots"/></svg></button>
        <button class="hide" aria-label="Hide menus"><svg><use href="#chevup"/></svg></button>
      </div>
    </div>

    <div class="formula">
      <button class="namebox">A1<svg class="caret"><use href="#caret"/></svg></button>
      <span class="fx">fx</span>
      <input type="text" value="Poissonnerie" aria-label="Formula">
      <button class="summary"><svg><use href="#sparkdark"/></svg>Summarize this data</button>
    </div>

    <div class="sheet">
      <div class="pane">
        <table>
          <colgroup><col class="cn"><col class="ca"><col class="cb"><col class="cc"><col class="cd"><col class="cd"><col class="cd"><col class="cd"><col class="cd"></colgroup>
          <thead><tr><th class="corner"></th><th class="on">A</th><th>B</th><th>C</th><th>D</th><th>E</th><th>F</th><th>G</th><th>H</th></tr></thead>
          <tbody>
            <tr class="title"><th class="on">1</th><td class="sel">Poissonnerie<i class="handle"></i></td><td>Adresse</td><td>Email</td><td></td><td></td><td></td><td></td><td></td></tr>
            <tr><th>2</th><td>La Fine Marée</td><td>7 R. de Lévis, 75017 Paris</td><td>contact@lafinemaree.com</td><td></td><td></td><td></td><td></td><td></td></tr>
            <tr><th>3</th><td>Poissonnerie Viot</td><td>6 Rue Lobineau, 75006 Paris</td><td>contact@poissonnerieviot.com</td><td></td><td></td><td></td><td></td><td></td></tr>
            <tr><th>4</th><td>Poissonnerie Ledreux</td><td>67 Av. du Général Leclerc, 75014 Paris</td><td>Businessgiovanni@hotmail.fr</td><td></td><td></td><td></td><td></td><td></td></tr>
            <tr><th>5</th><td>Poissonnerie du Dome</td><td>4 Rue Delambre, 75014 Paris</td><td>contact@poissonneriedudome.fr</td><td></td><td></td><td></td><td></td><td></td></tr>
            <tr><th>6</th><td>La Marée Beauvau</td><td class="fit">Marché Couvert Beauvau, 1 Rue d'Aligre, 75012 Paris</td><td>lamareebeauvau@gmail.com</td><td></td><td></td><td></td><td></td><td></td></tr>
            <tr><th>7</th><td>L'Ange des Mers</td><td>231 Rue de Charenton, 75012 Paris</td><td>isabelle.salgueiro@free.fr</td><td></td><td></td><td></td><td></td><td></td></tr>
            <tr><th>8</th><td>Poissonnerie du Bac</td><td>69 Rue du Bac, 75007 Paris</td><td>ballan.olivier@orange.fr</td><td></td><td></td><td></td><td></td><td></td></tr>
            <tr><th>9</th><td>Poissonnerie de Passy</td><td>1 Rue Bois le Vent, 75016 Paris</td><td>poissonneriedepassy@gmail.com</td><td></td><td></td><td></td><td></td><td></td></tr>
            <tr><th>10</th><td>Poissonnerie Collachot</td><td>262 Bis Rue des Pyrénées, 75020 Paris</td><td>poissonneriedcollachot@gmail.com</td><td></td><td></td><td></td><td></td><td></td></tr>
            <tr><th>11</th><td>Poissonnerie Vent et Marée &amp; Traiteur à Paris 19e,</td><td>100 Rue de Meaux, 75019 Paris</td><td>contact@ventetmaree.fr</td><td></td><td></td><td></td><td></td><td></td></tr>
            <tr><th>12</th><td>Poissonnerie Ebisu</td><td>215 Bd Voltaire, 75011 Paris</td><td>contact@ebisu-poissonnerie-paris11.fr</td><td></td><td></td><td></td><td></td><td></td></tr>
            <tr><th>13</th><td>Poissonnerie Monge</td><td>70 Rue Monge, 75005 Paris</td><td>sofaquo@orange.fr</td><td></td><td></td><td></td><td></td><td></td></tr>
            <tr><th>14</th><td>Poissonnerie L'Atlantide - Nation</td><td>6 Rue du Rendez-Vous, 75012 Paris</td><td>poissonnerie.latlantide@gmail.com</td><td></td><td></td><td></td><td></td><td></td></tr>
            <tr><th>15</th><td>Poissonnerie Daguerre Marée</td><td>4 Rue Bayen, 75017 Paris</td><td>contact@daguerremaree.fr</td><td></td><td></td><td></td><td></td><td></td></tr>
            <tr><th>16</th><td>Poissonnerie Domain &amp; Fils</td><td>11 Rue Poncelet, 75017 Paris</td><td>poissoneriedomain@gmail.com</td><td></td><td></td><td></td><td></td><td></td></tr>
            <tr><th>17</th><td>un poisson en ville</td><td class="fit">Marché st quentin, 85 Bis Bd de Magenta, 75010 Paris</td><td>1poissonenville@gmail.com</td><td></td><td></td><td></td><td></td><td></td></tr>
            <tr><th>18</th><td>Poissonnerie Jeanne D’arc</td><td>5 Rue Jeanne d'Arc, 75013 Paris</td><td>Stephaneribeiro86@gmail.com</td><td></td><td></td><td></td><td></td><td></td></tr>
            <tr><th>19</th><td>Poissonnerie Maison Belle Mer</td><td>45 bis Rue Hoche, 93500 Pantin</td><td>hello@maisonbellemer.com</td><td></td><td></td><td></td><td></td><td></td></tr>
            <tr><th>20</th><td>Poissonnerie Chez Julien &amp; Marielle</td><td>107 Rue de Charonne, 75011 Paris</td><td>Cjmparis11@gmail.Com</td><td></td><td></td><td></td><td></td><td></td></tr>
            <tr><th>21</th><td>Le Club du Poisson</td><td>10 Rue de l'Église, 92200 Neuilly-sur-Seine</td><td>bichard.nathalie@gmail.com</td><td></td><td></td><td></td><td></td><td></td></tr>
            <tr><th>22</th><td>Lecourbe-Marée</td><td>93 Rue Lecourbe, 75015 Paris</td><td>Lecourbemaree@orange.fr</td><td></td><td></td><td></td><td></td><td></td></tr>
            <tr><th>23</th><td>Lévis Marée</td><td>46 R. de Lévis, 75017 Paris</td><td>levis.maree@gmail.com</td><td></td><td></td><td></td><td></td><td></td></tr>
          </tbody>
        </table>
      </div>
      <div class="vscroll">
        <div class="cap"></div>
        <div class="vthumb"></div>
        <button class="up" aria-label="Scroll up"><svg class="caret"><use href="#caret"/></svg></button>
        <button aria-label="Scroll down"><svg class="caret"><use href="#caret"/></svg></button>
      </div>
    </div>

    <div class="hscroll">
      <div class="stub"></div>
      <div class="track"><div class="hthumb"></div></div>
      <button class="left" aria-label="Scroll left"><svg class="caret"><use href="#caret"/></svg></button>
      <button class="right" aria-label="Scroll right"><svg class="caret"><use href="#caret"/></svg></button>
      <div class="knee"></div>
    </div>

    <footer class="sheets">
      <button class="foot" aria-label="Add sheet"><svg><use href="#plus"/></svg></button>
      <button class="foot" aria-label="All sheets"><svg><use href="#menu"/></svg></button>
      <button class="sheettab">Sheet1<svg class="caret"><use href="#caret"/></svg></button>
    </footer>
  </main>

  <aside class="side">
    <button aria-label="Calendar"><span class="cal">31</span></button>
    <button aria-label="Keep"><svg><use href="#keep"/></svg></button>
    <button aria-label="Tasks"><svg><use href="#tasks"/></svg></button>
    <button aria-label="Contacts"><svg><use href="#contacts"/></svg></button>
    <button aria-label="Maps"><svg><use href="#pin"/></svg></button>
    <hr>
    <button class="add" aria-label="Add-ons"><svg><use href="#plus"/></svg></button>
    <button class="collapse" aria-label="Hide side panel"><svg><use href="#chevright"/></svg></button>
  </aside>
</div>
</body>
</html>
```
FILE: styles.css
```css
* { box-sizing: border-box; }
body { margin: 0; min-height: 100vh; display: flex; flex-direction: column; font-family: Roboto, "Liberation Sans", sans-serif; background: #f9fbff; color: #1f1f1f; }
button, input { font: inherit; color: inherit; border: 0; background: none; padding: 0; margin: 0; }
button { display: flex; align-items: center; justify-content: center; flex: none; white-space: nowrap; }
a { color: inherit; text-decoration: none; }
svg { display: block; flex: none; width: 20px; height: 20px; }
svg.caret { width: 10px; height: 10px; }
.sprite { position: absolute; width: 0; height: 0; }

/* Browser window */
.browser { background: #fff; border-bottom: 1px solid #dfe2e6; font-family: "Open Sans", "Noto Sans", sans-serif; color: #474747; }
.tabstrip { display: flex; height: 50px; background: #d3e3fd; padding-left: 8px; }
.tabsearch { width: 35px; height: 34px; margin: 8px 7px 0 0; border-radius: 12px; background: #ecf3fe; color: #0b2a66; }
.tabsearch svg { width: 17px; height: 17px; }
.tabs { display: flex; flex: 1; min-width: 0; }
.tab { flex: 1 1 0; min-width: 0; display: flex; align-items: center; gap: 11px; margin-top: 8px; padding: 0 7px 8px 10px; font-size: 15px; }
.tab:nth-child(-n+12) { flex: 0 1 70px; }
.tab span { overflow: hidden; white-space: nowrap; width: 17px; line-height: 24px; -webkit-mask-image: linear-gradient(90deg, #000 45%, transparent); mask-image: linear-gradient(90deg, #000 45%, transparent); }
.tab svg.ai { width: 18px; height: 18px; margin: 0 1px; }
.tab.ringed svg { width: 26px; height: 26px; margin: 0 -3px; }
.tab.active { position: relative; gap: 4px; color: #1f1f1f; }
.tab.active::before { content: ""; position: absolute; z-index: 0; inset: 0 7px 0 0; border-radius: 12px 12px 0 0; background: #fff; }
.tab.active::after { content: ""; position: absolute; left: -15px; right: -8px; bottom: 0; height: 15px; background: radial-gradient(circle at 0 0, transparent 15px, #fff 15px) 0 0 / 15px 15px no-repeat, radial-gradient(circle at 100% 0, transparent 15px, #fff 15px) 100% 0 / 15px 15px no-repeat; }
.tab.active svg { position: relative; z-index: 1; }
.newtab { width: 34px; height: 50px; padding-bottom: 1px; color: #333; }
.newtab svg { width: 22px; height: 22px; }
.wincontrols { display: flex; margin-left: 68px; color: #111; }
.wincontrols button { width: 57px; height: 50px; }

.navbar { display: flex; align-items: center; height: 58px; padding: 0 6px; border-radius: 12px 12px 0 0; background: #fff; }
.nav { width: 45px; height: 42px; color: #444746; }
.nav svg { width: 22px; height: 22px; }
.nav svg.s20 { width: 20px; height: 20px; }
.nav.off { color: #aaa; }
.omnibox { display: flex; flex: 1; min-width: 0; align-items: center; height: 42px; margin: 0 11px 0 10px; padding: 0 8px 0 6px; border-radius: 21px; background: #edf1fa; }
.siteinfo { width: 30px; height: 30px; border-radius: 50%; background: #fff; color: #333; }
.siteinfo svg { width: 20px; height: 20px; }
.url { flex: 1; min-width: 0; margin-left: 10px; overflow: hidden; white-space: nowrap; font-size: 17px; line-height: 24px; }
.url b { font-weight: 400; color: #1f1f1f; }
.extensions { display: flex; }
.bar { flex: none; width: 2px; height: 20px; border-radius: 1px; background: #d3e3fd; margin: 0 10px; }
.badged { position: relative; }
.badge { position: absolute; left: 20px; top: 21px; width: 20px; height: 18px; border-radius: 4px; background: #e33123; color: #fff; font-size: 12px; font-weight: 700; line-height: 18px; text-align: center; }
.profile { width: 26px; height: 26px; border-radius: 50%; background: #ab47bc; color: #fff; font: 14px/26px Roboto, sans-serif; }

.bookmarks { display: flex; align-items: center; height: 42px; padding: 0 18px 8px 14px; font-size: 14px; white-space: nowrap; }
.bookmarks a { display: flex; align-items: center; gap: 7px; margin-right: 21px; line-height: 20px; }
.bookmarks a.long { width: 172px; }
.bookmarks .bar { margin: 0 19px 0 18px; }
.bookmarks .more { margin-left: auto; }
.bookmarks a.all { gap: 10px; margin-right: 0; }

/* Document header */
.app { flex: 1; display: grid; grid-template-columns: minmax(0, 1fr) 70px; grid-template-rows: 81px 1fr; }
.doc { grid-column: 1 / -1; display: flex; padding: 0 19px 0 20px; }
.logo { margin: 23px 16px 0 0; }
.logo svg { width: 41px; height: 30px; }
.titles { padding-top: 13px; }
.titlerow { display: flex; align-items: center; height: 32px; color: #444746; }
.titlerow h1 { margin: 0 27px 0 0; font-size: 22px; line-height: 32px; font-weight: 400; color: #1f1f1f; }
.titlerow button { margin-right: 18px; }
.titlerow svg { width: 22px; height: 22px; }
.menus { display: flex; gap: 19px; font-size: 18px; line-height: 24px; }
.actions { display: flex; align-items: center; height: 50px; margin: 13px 0 0 auto; color: #444746; }
.act { margin-right: 34px; }
.act svg { width: 28px; height: 28px; }
.act.meet { gap: 12px; padding-left: 6px; margin-right: 28px; }
.meet svg.caret { width: 10px; height: 10px; }
.share { display: flex; height: 50px; margin-right: 10px; border-radius: 25px; background: #c2e7ff; color: #004a77; font-weight: 500; overflow: hidden; font-size: 18px; }
.sharemain { width: 113px; gap: 10px; padding-left: 8px; }
.sharemain svg { width: 22px; height: 22px; }
.sharemore { width: 41px; border-left: 1px solid #fff; }
.upgrade { width: 135px; height: 50px; border-radius: 25px; background: #d3e3fd; color: #0842a0; font-weight: 500; font-size: 18px; }
.gemini { margin: 0 22px; }
.gemini svg { width: 24px; height: 24px; }
.account { position: relative; width: 52px; height: 52px; }
.account svg { position: absolute; inset: 0; width: 52px; height: 52px; }
.account span { position: relative; width: 40px; height: 40px; border-radius: 50%; background: #ab47bc; color: #fff; font-size: 22px; line-height: 40px; }

/* Toolbar */
.work { display: flex; flex-direction: column; min-width: 0; }
.toolbar { display: flex; align-items: center; flex: none; height: 50px; margin: 0 20px 10px; padding: 0 15px 0 14px; border-radius: 25px; background: #f0f4f9; color: #444746; overflow: hidden; }
.group { display: flex; align-items: center; flex: none; }
.group + .group { margin-left: 4px; }
.group + .group::before { content: ""; width: 1px; height: 25px; margin-right: 4px; background: #c7c7c7; }
.group button { width: 40px; height: 38px; }
.tight button { width: 39px; }
.roomy button { width: 42px; }
.group .first { margin-right: 4px; }
.group svg.s24 { width: 24px; height: 24px; }
.group .zoom { width: 96px; justify-content: space-between; padding: 0 12px 0 11px; font-size: 18px; }
.group .light { font-size: 17px; }
.group .num { font-size: 15px; }
.group .dec { position: relative; justify-content: flex-start; padding: 0 0 6px 8px; font-size: 17px; font-weight: 500; }
.dec svg { position: absolute; right: 11px; bottom: 7px; width: 12px; height: 8px; }
.group .font { width: 123px; justify-content: space-between; padding: 0 15px; font-size: 18px; color: #5f6361; }
.group .step { width: 30px; }
.size { width: 42px; height: 30px; margin: 0 3px 0 5px; border: 1px solid #747775; border-radius: 5px; text-align: center; font-size: 17px; }
.group .bold { width: 38px; margin: 0 1px 0 2px; border-radius: 5px; background: #d3e3fd; color: #041e49; font-size: 18px; font-weight: 700; }
.group .ink { flex-direction: column; font-size: 18px; font-weight: 500; line-height: 20px; gap: 2px; }
.ink i { width: 29px; height: 5px; background: #134f5c; }
.ink .white { background: #fff; }
.group .drop { width: 50px; gap: 7px; }
.group .wide { width: 56px; gap: 10px; color: #b4b7ba; }
.group.end { flex: 1; margin-left: 7px; }
.end .hide { margin-left: auto; }

/* Formula bar */
.formula { display: flex; align-items: center; flex: none; height: 35px; margin-right: 20px; padding: 0 0 1px 18px; background: #fff; font-size: 15px; }
.namebox { width: 99px; justify-content: space-between; }
.namebox svg, .zoom svg, .font svg { color: #444746; }
.fx { margin: 0 12px 0 31px; width: 16px; color: #80868b; font: italic 18px/24px "Liberation Serif", serif; }
.formula input { flex: 1; min-width: 0; }
.summary { width: 202px; height: 29px; gap: 6px; border-radius: 15px; background: #f0f4f9; font-size: 16px; }
.summary svg { width: 17px; height: 17px; }

/* Grid */
.sheet { display: flex; flex: 1 0 auto; border-top: 1px solid #c4c7c5; background: #fff; }
.pane { flex: 1; min-width: 0; overflow: hidden; contain: inline-size; padding-bottom: 1px; }
table { table-layout: fixed; width: 1867px; border-collapse: separate; border-spacing: 0; }
.cn { width: 58px; } .ca { width: 456px; } .cb { width: 410px; } .cc { width: 314px; } .cd { width: 126px; }
th { padding: 0; border: solid #c4c7c5; border-width: 0 1px 1px 0; font-size: 13px; font-weight: 400; color: #444746; }
thead th { height: 30px; padding-bottom: 2px; font-size: 14px; }
thead .on { background: #d3e3fd; color: #041e49; font-weight: 500; }
.corner { background: #f8f9fa; border-width: 0 5px 6px 0; }
tbody th { height: 26px; padding-bottom: 3px; line-height: 16px; }
tbody th.on { background: #d3e3fd; color: #041e49; }
td { height: 26px; padding: 3px 0 0 4px; border: solid #e1e1e1; border-width: 0 1px 1px 0; font: 17px/20px "Liberation Sans", Arial, sans-serif; color: #000; white-space: nowrap; }
td.fit { font-size: 16px; }
.title td:nth-child(-n+4) { background: #134f5c; border-color: #134f5c; color: #fff; font-weight: 700; }
.title td.sel { position: relative; box-shadow: inset 0 1px #3871e0, inset -1px -1px #3871e0; border-color: #3871e0; }
.handle { position: absolute; z-index: 1; right: -6px; bottom: -6px; width: 11px; height: 11px; border: 1px solid #fff; border-radius: 50%; background: #0b57d0; }
.vscroll { display: flex; flex-direction: column; width: 15px; border-left: 1px solid #c4c7c5; }
.cap { height: 30px; background: #f8f9fa; border-bottom: 1px solid #c4c7c5; }
.vthumb { height: 33px; margin: 1px 1px auto; border-radius: 6px; background: #dadada; }
.vscroll button, .hscroll button { background: #f8f9fa; color: #8a8d90; }
.vscroll button { height: 20px; border-top: 1px solid #c4c7c5; }
.vscroll svg.caret, .hscroll svg.caret { width: 7px; height: 7px; }
.up svg { transform: rotate(180deg); }
.hscroll { display: flex; flex: none; height: 17px; border: solid #c4c7c5; border-width: 1px 0; background: #fff; }
.stub { width: 58px; border-right: 1px solid #c4c7c5; background: #f8f9fa; }
.track { flex: 1; padding: 1px 2px; }
.hthumb { width: 42%; height: 12px; border-radius: 6px; background: #dadada; }
.hscroll button { border-left: 1px solid #c4c7c5; }
.hscroll .left { width: 20px; }
.hscroll .right { width: 17px; }
.left svg { transform: rotate(90deg); }
.right svg { transform: rotate(-90deg); }
.knee { width: 15px; border-left: 3px double #c4c7c5; background: #f8f9fa; }
.sheets { display: flex; flex: none; height: 46px; padding-left: 52px; color: #444746; }
.foot { width: 49px; justify-content: flex-start; }
.foot:first-child svg { width: 24px; height: 24px; margin-left: 13px; }
.foot svg { width: 22px; height: 22px; margin-left: 14px; }
.sheettab { width: 113px; gap: 13px; margin-left: 16px; background: #dde3ea; color: #0b57d0; font-size: 18px; font-weight: 700; }

/* Side panel */
.side { display: flex; flex-direction: column; align-items: center; padding-bottom: 18px; }
.side button { width: 50px; height: 34px; margin: 10px 0 26px; }
.side svg { width: 23px; height: 23px; }
.cal { width: 20px; height: 22px; border-radius: 3px; background: linear-gradient(#a79bfb, #4a8bfd 35%, #2f86ff); color: #fff; font-size: 13px; line-height: 22px; font-weight: 500; }
.side hr { width: 25px; height: 1px; margin: 12px 0 38px; border: 0; background: #d5d7da; }
.side .add { margin: 0; color: #000; }
.side .add svg { width: 28px; height: 28px; }
.side .collapse { margin: auto 0 0; color: #5f6368; }
```
